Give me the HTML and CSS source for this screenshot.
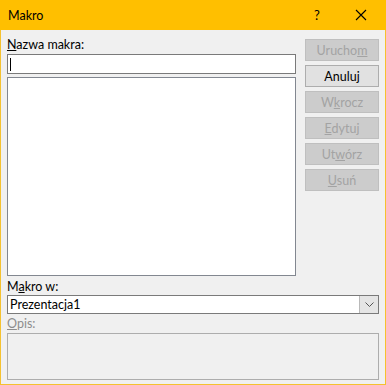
FILE: index.html
```html
<!DOCTYPE html>
<html lang="pl">
<head>
    <meta charset="UTF-8">
    <title>Makro</title>
    <link rel="stylesheet" href="styles.css">
</head>
<body>
    <div class="window">
        <div class="titlebar">
            <span class="title">Makro</span>
            <span class="help">?</span>
            <span class="close">
                <svg width="12" height="12" viewBox="0 0 12 12">
                    <path d="M1 1 L11 11 M11 1 L1 11" stroke="#000" stroke-width="1.1" fill="none"/>
                </svg>
            </span>
        </div>
        <div class="content">
            <div class="top">
                <div class="main-col">
                    <div class="label"><u>N</u>azwa makra:</div>
                    <div class="textbox"><span class="caret"></span></div>
                    <div class="listbox"></div>
                </div>
                <div class="buttons">
                    <button class="btn" disabled>Urucho<u>m</u></button>
                    <button class="btn active">Anuluj</button>
                    <button class="btn" disabled>W<u>k</u>rocz</button>
                    <button class="btn" disabled><u>E</u>dytuj</button>
                    <button class="btn" disabled>Ut<u>w</u>órz</button>
                    <button class="btn" disabled><u>U</u>suń</button>
                </div>
            </div>
            <div class="label label-mid">M<u>a</u>kro w:</div>
            <div class="select">
                <span class="select-text">Prezentacja1</span>
                <span class="drop">
                    <svg width="9" height="5" viewBox="0 0 9 5">
                        <path d="M0.5 0.5 L4.5 4.5 L8.5 0.5" stroke="#555" stroke-width="1" fill="none"/>
                    </svg>
                </span>
            </div>
            <div class="label label-off"><u>O</u>pis:</div>
            <div class="desc"></div>
        </div>
    </div>
</body>
</html>
```

FILE: styles.css
```css
* {
    box-sizing: border-box;
}
body {
    margin: 0;
    font-family: "Lato", "Noto Sans", sans-serif;
    font-size: 12.5px;
    color: #000;
    background: #fff;
}
.window {
    width: 386px;
    height: 385px;
    background-color: #f0f0f0;
    border: 1px solid #f5c12e;
    border-top: none;
    display: flex;
    flex-direction: column;
}
.titlebar {
    height: 30px;
    margin: 0 -1px;
    background-color: #ffbf00;
    display: flex;
    align-items: center;
    padding-left: 8px;
}
.title {
    flex: 1;
}
.help {
    width: 12px;
    margin-right: 29px;
    font-size: 13px;
}
.close {
    display: flex;
    margin-right: 19px;
}
.content {
    flex: 1;
    padding: 0 6px;
}
.top {
    display: flex;
    gap: 9px;
}
.main-col {
    width: 289px;
    padding-top: 7px;
}
.label {
    height: 17px;
    line-height: 15px;
}
.label u {
    text-decoration-thickness: 1px;
}
.label-mid {
    margin-top: 3px;
    height: 16px;
}
.label-off {
    color: #8d8d8d;
    height: 17px;
    margin-top: 2px;
}
.textbox {
    height: 20px;
    background: #fff;
    border: 1px solid #7a7a7a;
    padding: 3px 2px;
}
.caret {
    display: block;
    width: 1px;
    height: 13px;
    background: #000;
}
.listbox {
    margin-top: 3px;
    height: 199px;
    background: #fff;
    border: 1px solid #828790;
}
.buttons {
    width: 74px;
    padding-top: 9px;
    display: flex;
    flex-direction: column;
    gap: 4px;
}
.btn {
    height: 22px;
    font-family: inherit;
    font-size: 12.5px;
    background-color: #cccccc;
    border: 1px solid #bfbfbf;
    color: #a3a3a3;
    padding: 0;
}
.btn.active {
    background-color: #e1e1e1;
    border-color: #adadad;
    color: #000;
}
.select {
    height: 19px;
    background: #fff;
    border: 1px solid #7a7a7a;
    display: flex;
    align-items: center;
}
.select-text {
    flex: 1;
    padding-left: 2px;
}
.drop {
    width: 19px;
    height: 17px;
    background: #e5e5e5;
    border-left: 1px solid #b9b9b9;
    display: flex;
    align-items: center;
    justify-content: center;
}
.desc {
    height: 47px;
    border: 1px solid #adadad;
    background: #f0f0f0;
}
```
